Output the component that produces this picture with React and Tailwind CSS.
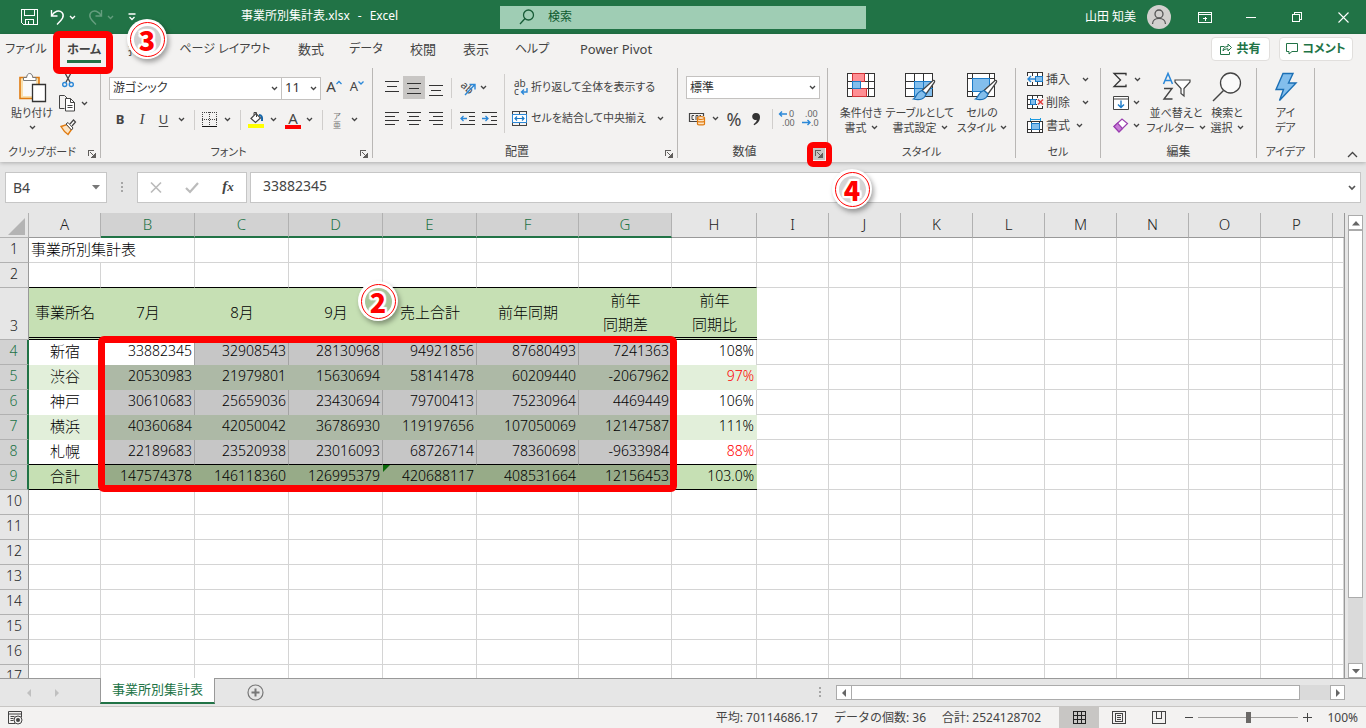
import React from "react";

const Svg = ({ w, h, children, crisp, className = "" }) => (
  <svg
    width={w}
    height={h}
    viewBox={`0 0 ${w} ${h}`}
    fill="none"
    stroke="#3b3a39"
    shapeRendering={crisp ? "crispEdges" : "auto"}
    className={`shrink-0 overflow-visible ${className}`}
    aria-hidden="true"
  >
    {children}
  </svg>
);

const Chev = ({ color = "#444", className = "" }) => (
  <Svg w={7} h={5} className={className}>
    <path d="M1 1l2.5 2.5L6 1" stroke={color} strokeWidth="1.3" />
  </Svg>
);

const Btn = ({ label, className = "", children }) => (
  <button type="button" aria-label={label} className={`flex shrink-0 items-center justify-center ${className}`}>
    {children}
  </button>
);

const Sep = ({ className = "h-5" }) => <span className={`w-px shrink-0 bg-[#d0cecc] ${className}`} />;

const Launcher = () => (
  <Svg w={8} h={8} crisp>
    <path d="M0.5 6V0.5H6M2.5 2.500l4 4M7.5 3v4.500h-5" stroke="#605e5c" />
    <path d="M4 6.500h3M6.500 4v3" stroke="#605e5c" />
  </Svg>
);

const Group = ({ name, width, launcher, small, children }) => (
  <section aria-label={name} className={`flex h-[90px] shrink-0 flex-col border-r border-[#b9b7b5] ${width}`}>
    <div className="flex h-[78px]">{children}</div>
    <div className={`relative flex h-3 items-center justify-center leading-3 ${small ? "text-[11px]" : "text-xs"}`}>
      <span className={launcher ? "pr-4" : ""}>{name}</span>
      {launcher}
    </div>
  </section>
);

const LaunchBtn = ({ name }) => (
  <button type="button" aria-label={`${name}の設定`} className="absolute right-1 top-1">
    <Launcher />
  </button>
);

const Badge = ({ n, className, inner }) => (
  <span
    className={`pointer-events-none absolute z-20 flex size-10 items-center justify-center rounded-full bg-white shadow-[2px_3px_5px_rgba(0,0,0,0.35)] ${className}`}
  >
    <span className="flex size-[35px] items-center justify-center rounded-full border-[1.5px] border-[#f00]">
      <span className={`flex size-[27px] items-center justify-center rounded-full ${inner}`}>
        <span className="font-['Noto_Sans_CJK_JP',sans-serif] text-[27px] leading-[27px] font-black text-[#f00] [text-shadow:2px_0_1px_#fff,-2px_0_1px_#fff,0_2px_1px_#fff,0_-2px_1px_#fff,2px_2px_1px_#fff,-2px_-2px_1px_#fff,2px_-2px_1px_#fff,-2px_2px_1px_#fff]">
          {n}
        </span>
      </span>
    </span>
  </span>
);

const Dropdown = ({ label, value, className }) => (
  <label className={`relative flex h-[23px] shrink-0 items-center border border-[#c4c2c0] bg-white ${className}`}>
    <select aria-label={label} className="h-full w-full appearance-none bg-transparent pl-[3px] text-[#333] outline-none">
      <option>{value}</option>
    </select>
    <Chev className="pointer-events-none absolute right-[3px]" />
  </label>
);

/* ---------- ribbon icons ---------- */
const PasteIcon = () => (
  <Svg w={28} h={30}>
    <path d="M2 5.5h19v21H2z" stroke="#e07b10" strokeWidth="1.6" fill="#f9e0ae" />
    <path d="M5 8h13v16H5z" fill="#fafafa" stroke="none" />
    <path d="M5.5 8.5v-3h3.200c0-2 1-4 3-4s3 2 3 4h3.300v3z" fill="#fff" stroke="#777" />
    <path d="M14.500 12.500h13v17h-13z" fill="#fff" stroke="#333" strokeWidth="1.3" />
  </Svg>
);
const CutIcon = () => (
  <Svg w={14} h={16}>
    <path d="M4 1l5.500 10M10 1L4.500 11" stroke="#444" strokeWidth="1.3" />
    <circle cx="3.700" cy="12.500" r="2" stroke="#2b88d8" strokeWidth="1.4" />
    <circle cx="10.300" cy="12.500" r="2" stroke="#2b88d8" strokeWidth="1.4" />
  </Svg>
);
const CopyIcon = () => (
  <Svg w={17} h={17}>
    <path d="M5.500 13.500h-5V.5h5l3 3" stroke="#444" />
    <path d="M6.500 3.500h5l4 4v8.500h-9z" fill="#fff" stroke="#444" />
    <path d="M11.500 3.500v4h4M8.500 10.500h5M8.500 12.500h5" stroke="#444" />
  </Svg>
);
const BrushIcon = () => (
  <Svg w={17} h={16}>
    <path d="M1 7.500l6-2 4.500 5-3.500 5C5 13.500 3 11 1 7.500z" fill="#fce4c4" stroke="#e07b10" strokeWidth="1.4" />
    <path d="M6 5l2-1.500 5 5.500-1.500 2z" fill="#fff" stroke="#444" />
    <path d="M10 5l3.500-4 2 2-3.500 4" fill="#fff" stroke="#444" strokeWidth="1.2" />
  </Svg>
);
const BordersIcon = () => (
  <Svg w={15} h={15} crisp>
    <path d="M.5 0v14M7.500 0v14M14.500 0v14M0 .5h15M0 7.500h15" stroke="#444" strokeDasharray="1 1" />
    <path d="M0 14.500h15" stroke="#111" />
  </Svg>
);
const FillIcon = () => (
  <Svg w={17} h={17}>
    <path d="M3 7.500l5-5 4.500 4.500-5 4.500z" fill="#fff" stroke="#444" strokeWidth="1.2" />
    <path d="M6 4V1.500h2.500V6" stroke="#444" />
    <path d="M11 4c2.500 0 3.500 2 3 6" stroke="#1565a8" strokeWidth="2" />
    <path d="M0 13h16v4H0z" fill="#ff0" stroke="none" />
  </Svg>
);
const AlignIcon = ({ lines }) => (
  <Svg w={14} h={16} crisp>
    {lines.map(([x, y, len]) => (
      <path key={y} d={`M${x} ${y}.5h${len}`} stroke="#333" />
    ))}
  </Svg>
);
const OrientIcon = () => (
  <Svg w={17} h={17}>
    <text x="1" y="7" transform="rotate(42 1 7)" fontSize="11" fill="#444" stroke="none">ab</text>
    <path d="M6 16L15.500 6M10.500 5.500h5.500v5" stroke="#2b88d8" strokeWidth="1.4" />
  </Svg>
);
const IndentIcon = ({ right }) => (
  <Svg w={15} h={13}>
    <path d="M0 .5h15M9 4.500h6M9 8.500h6M0 12.500h15" stroke="#333" shapeRendering="crispEdges" />
    {right ? (
      <path d="M0 6.500h6M3.500 4l2.500 2.500L3.500 9" stroke="#2b88d8" strokeWidth="1.3" />
    ) : (
      <path d="M7 6.500H1M3.500 4L1 6.500 3.500 9" stroke="#2b88d8" strokeWidth="1.3" />
    )}
  </Svg>
);
const WrapIcon = () => (
  <Svg w={15} h={17}>
    <text x="0" y="8" fontSize="10" fill="#444" stroke="none">ab</text>
    <text x="0" y="16" fontSize="10" fill="#444" stroke="none">c</text>
    <path d="M13 9v4H7.500M10 10.500L7.500 13l2.500 2.500" stroke="#2b88d8" strokeWidth="1.4" />
  </Svg>
);
const MergeIcon = () => (
  <Svg w={15} h={15}>
    <path d="M.5.5h14v14H.5zM7.500.5v14" stroke="#444" shapeRendering="crispEdges" />
    <path d="M.5 3.500h14v8H.5z" fill="#fff" stroke="#2b88d8" />
    <path d="M3 7.500h9M5 5.500l-2 2 2 2M10 5.500l2 2-2 2" stroke="#1b7ac7" strokeWidth="1.2" />
  </Svg>
);
const CurrencyIcon = () => (
  <Svg w={17} h={14}>
    <path d="M8 9.500H.5v-8h14V4" stroke="#444" strokeWidth="1.2" />
    <path d="M5 3.500H3v4h2M7 8V3.500h2v3M12 3.500h-1.500" stroke="#444" />
    <path d="M8.500 6v6c0 1.200 7 1.200 7 0V6z" fill="#fce4c4" stroke="#e07b10" strokeWidth="1.200" />
    <ellipse cx="12" cy="6" rx="3.500" ry="1.400" fill="#fff" stroke="#e07b10" strokeWidth="1.200" />
    <path d="M8.500 9c0 1.200 7 1.200 7 0" stroke="#e07b10" strokeWidth="1.200" />
  </Svg>
);
const DecimalIcon = ({ less }) => (
  <Svg w={17} h={17}>
    <text x={less ? 3 : 10} y="7" fontSize="9" fill="#666" stroke="none">{less ? ".00" : "0"}</text>
    <text x={less ? 9 : 3} y="16" fontSize="9" fill="#666" stroke="none">{less ? ".0" : ".00"}</text>
    {less ? (
      <path d="M0 12.500h8M5.500 10L8 12.500 5.500 15" stroke="#2b88d8" strokeWidth="1.4" />
    ) : (
      <path d="M8 4H.5M3 1.500L.5 4 3 6.500" stroke="#2b88d8" strokeWidth="1.4" />
    )}
  </Svg>
);
const CondIcon = () => (
  <Svg w={30} h={26} crisp>
    <path d="M1.500 1.500h27v23h-27z" fill="#fff" stroke="#333" />
    <path d="M6.500 1.500v23M22.500 1.500v23M1.500 9.500h27M1.500 16.500h27" stroke="#333" />
    <path d="M6.500 1.500h12v8h-12zM6.500 16.500h14v8h-14z" fill="#ff8f94" stroke="#d13438" />
    <path d="M6.500 9.500h8v7h-8z" fill="#83beec" stroke="#1b7ac7" />
  </Svg>
);
const Paint = () => (
  <>
    <path d="M29 8.500c1.500-.5 2 .5 1.300 2L22 22l-4-3.500z" fill="#fff" stroke="#444" strokeWidth="1.3" />
    <path d="M18 18.500l4 3.500c-1 5-6 6.500-12.500 5 3-1.500 2.500-7 8.500-8.500z" fill="#83beec" stroke="#1b6fb5" strokeWidth="1.2" />
  </>
);
const TableIcon = () => (
  <Svg w={32} h={29}>
    <path d="M1.500 1.500h27v23h-27z" fill="#fff" stroke="#333" shapeRendering="crispEdges" />
    <path d="M10 9h18v15H10z" fill="#83beec" stroke="none" />
    <path d="M1.500 9.500h27M1.500 16.500h27M10.500 1.500v23M19.500 1.500v23" stroke="#333" shapeRendering="crispEdges" />
    <path d="M10.500 24.500v-15h18M10.500 16.500h18M19.500 9.500v15" stroke="#1b7ac7" shapeRendering="crispEdges" />
    <Paint />
  </Svg>
);
const CellStyleIcon = () => (
  <Svg w={32} h={29}>
    <path d="M1.500 1.500h27v23h-27z" fill="#fff" stroke="#333" shapeRendering="crispEdges" />
    <path d="M6.500 1.500v23M23.500 1.500v5M1.500 6.500h27M1.500 19.500h5" stroke="#333" shapeRendering="crispEdges" />
    <path d="M6.500 6.500h17v13h-17z" fill="#83beec" stroke="#1b7ac7" shapeRendering="crispEdges" />
    <Paint />
  </Svg>
);
const CellIcon = ({ kind }) => (
  <Svg w={17} h={15}>
    {kind === "format" ? (
      <>
        <path d="M.5 3.500h15v11H.5zM4.500 3v11M12.500 3v11M.5 11.500h15" fill="#fff" stroke="#333" shapeRendering="crispEdges" />
        <path d="M4.500 5.500h8v6h-8z" fill="#83beec" stroke="#1b7ac7" shapeRendering="crispEdges" />
        <path d="M3.500 0v3M13.500 0v3M3.500 1.500h10" stroke="#1b9ae0" shapeRendering="crispEdges" />
      </>
    ) : (
      <>
        <path d="M.5.5h15v13H.5zM5.500.5v4M10.500.5v4M.5 4.500h15M.5 9.500h15M5.500 9.500v4M10.500 9.500v4" fill="#fff" stroke="#333" shapeRendering="crispEdges" />
        {kind === "insert" ? (
          <>
            <path d="M8.500 4.500h7v5h-7z" fill="#83beec" stroke="#1b7ac7" shapeRendering="crispEdges" />
            <path d="M0 4h8v6H0z" fill="#f3f2f1" stroke="none" />
            <path d="M8 7H1M4 4L1 7l3 3" stroke="#2b88d8" strokeWidth="1.4" />
          </>
        ) : (
          <>
            <path d="M3.500 4.500h5v5h-5z" fill="#83beec" stroke="#1b7ac7" shapeRendering="crispEdges" />
            <path d="M10 3h7v8h-7z" fill="#f3f2f1" stroke="none" />
            <path d="M11 4.500l5 5M16 4.500l-5 5" stroke="#e03c3c" strokeWidth="1.5" />
          </>
        )}
      </>
    )}
  </Svg>
);
const SortIcon = () => (
  <Svg w={29} h={30}>
    <path d="M1.500 12L6 1.500 10.500 12M3 8.500h6" stroke="#2b88d8" strokeWidth="1.5" />
    <path d="M2 16.500h8L2 27h8.500" stroke="#444" strokeWidth="1.4" />
    <path d="M13 8h15v2l-6 6.500v7.500l-3-2.500v-5L13 10z" fill="#fff" stroke="#444" strokeWidth="1.2" />
  </Svg>
);
const FindIcon = () => (
  <Svg w={30} h={30}>
    <circle cx="18.500" cy="11" r="10" fill="#fafafa" stroke="#444" strokeWidth="1.3" />
    <path d="M11.500 18.500L1 29" stroke="#444" strokeWidth="1.4" />
  </Svg>
);
const BoltIcon = () => (
  <Svg w={24} h={30}>
    <path d="M9 1.500h10L14.500 11H22L5.500 28.500 9.500 17.500H2z" fill="#83beec" stroke="#1b6fb5" strokeWidth="1.4" />
  </Svg>
);

const BigBtn = ({ icon, l1, l2, chev, className = "" }) => (
  <button type="button" className={`flex shrink-0 flex-col items-center pt-1 text-[11px] leading-[15px] whitespace-nowrap ${className}`}>
    <span className="flex h-[33px] items-start justify-center">{icon}</span>
    <span>{l1}</span>
    <span className="flex items-center gap-1">
      {l2}
      {chev && <Chev />}
    </span>
  </button>
);

const tabs = [
  ["ファイル", "w-[52px] text-xs"],
  ["ホーム", "w-[64px] text-xs"],
  ["挿入", "w-[50px] text-[13px]"],
  ["ページ レイアウト", "w-[118px] text-xs"],
  ["数式", "w-[54px] text-[13px]"],
  ["データ", "w-[56px] text-xs"],
  ["校閲", "w-[58px] text-[13px]"],
  ["表示", "w-[48px] text-[13px]"],
  ["ヘルプ", "w-[64px] text-xs"],
  ["Power Pivot", "w-[104px] text-[13px]"],
];

const TitleBar = () => (
  <header className="grid h-[34px] shrink-0 grid-cols-[1fr_366px_1fr] items-center bg-[#217346] text-xs text-white">
    <div className="flex items-center">
      <div className="flex w-[241px] items-center pl-5">
        <Btn label="上書き保存" className="w-[18px]">
          <Svg w={17} h={16} crisp>
            <path d="M.5.5h16v15h-14l-2-2zM3.500.5v6h10v-6M4.500 15v-5h8v5M7.500 12v3" stroke="#fff" />
          </Svg>
        </Btn>
        <Btn label="元に戻す" className="ml-3 gap-1">
          <Svg w={15} h={16}>
            <path d="M1.500 1v6h6M1.500 7C4.500 2 9 .500 12 3.500c3.500 4-1 8-5 12" stroke="#fff" strokeWidth="1.4" />
          </Svg>
          <Chev color="#fff" />
        </Btn>
        <Btn label="やり直し" className="ml-3 gap-1 opacity-30">
          <Svg w={15} h={16}>
            <path d="M13.500 1v6h-6M13.500 7C10.500 2 6 .500 3 3.500c-3.500 4 1 8 5 12" stroke="#fff" strokeWidth="1.4" />
          </Svg>
          <Chev color="#fff" />
        </Btn>
        <Btn label="クイック アクセス ツール バーのカスタマイズ" className="ml-[14px]">
          <Svg w={8} h={8}>
            <path d="M.5 1h7M1.500 4L4 6.500 6.500 4" stroke="#fff" strokeWidth="1.3" />
          </Svg>
        </Btn>
      </div>
      <h1 className="flex gap-2 pb-0.5 whitespace-nowrap">
        <span>事業所別集計表.xlsx</span>
        <span>-</span>
        <span>Excel</span>
      </h1>
    </div>
    <label className="flex h-[23px] items-center bg-[#9fcdb4] text-[#0d5a2e]">
      <Svg w={16} h={16} className="ml-[19px]">
        <circle cx="9.500" cy="6" r="5" stroke="#185c37" strokeWidth="1.3" />
        <path d="M6 9.500L1 15" stroke="#185c37" strokeWidth="1.3" />
      </Svg>
      <input
        type="text"
        aria-label="検索"
        placeholder="検索"
        className="ml-[13px] w-64 bg-transparent outline-none placeholder:text-[#0d5a2e]"
      />
    </label>
    <div className="flex items-center justify-end">
      <span>山田 知美</span>
      <Svg w={24} h={24} className="ml-[11px]">
        <circle cx="12" cy="12" r="12" fill="#d2d0ce" stroke="none" />
        <circle cx="12" cy="9" r="4" stroke="#555" strokeWidth="1.3" />
        <path d="M5.500 19c0-7.500 13-7.500 13 0" stroke="#555" strokeWidth="1.3" />
      </Svg>
      <Btn label="リボンの表示オプション" className="ml-[11px] w-[46px]">
        <Svg w={14} h={11} crisp>
          <path d="M.5.5h13v10H.5zM.5 2.500h13M7 9V5M5 6.500h4" stroke="#fff" />
        </Svg>
      </Btn>
      <Btn label="最小化" className="w-[46px]">
        <span className="h-px w-[10px] bg-white" />
      </Btn>
      <Btn label="元に戻す (縮小)" className="w-[46px]">
        <Svg w={11} h={11} crisp>
          <path d="M.5 2.500h7v7h-7zM2.500 2.500v-2h7v7h-2" stroke="#fff" />
        </Svg>
      </Btn>
      <Btn label="閉じる" className="w-[46px]">
        <Svg w={11} h={11}>
          <path d="M.5.5l10 10M10.500.5l-10 10" stroke="#fff" strokeWidth="1.1" />
        </Svg>
      </Btn>
    </div>
  </header>
);

const TabRow = () => (
  <nav className="flex h-[34px] shrink-0 items-center">
    {tabs.map(([t, w]) => (
      <div key={t} className={`relative flex shrink-0 justify-center ${w}`}>
        <button
          type="button"
          className={
            t === "ホーム"
              ? "border-b-[3px] border-[#217346] leading-5 font-bold whitespace-nowrap"
              : "pb-1 leading-5 whitespace-nowrap"
          }
        >
          {t}
        </button>
        {t === "ホーム" && (
          <span className="pointer-events-none absolute -top-[9px] left-px z-10 h-[43px] w-[60px] rounded-md border-[7px] border-[#f00]" />
        )}
        {t === "挿入" && <Badge n="3" className="-top-5 left-[11px]" inner="bg-[#cfcfcf]" />}
      </div>
    ))}
    <div className="ml-auto flex gap-[9px] pr-[13px] pb-1 text-xs font-bold text-[#217346]">
      <button type="button" className="flex h-6 w-[59px] items-center justify-center gap-1 rounded-sm border border-[#e1dfdd] bg-white whitespace-nowrap">
        <Svg w={12} h={12}>
          <path d="M4.500 3.500H.5v8h9V9" stroke="#217346" />
          <path d="M3 8c0-3 2-4.500 5-4.500v-2.500l3.500 3.500L8 8V5.800C5.500 5.800 4 6.500 3 8z" stroke="#217346" />
        </Svg>
        共有
      </button>
      <button type="button" className="flex h-6 w-[74px] items-center justify-center gap-1 rounded-sm border border-[#e1dfdd] bg-white whitespace-nowrap">
        <Svg w={12} h={12}>
          <path d="M.5.5h11v8H6l-3 2.500V8.500H.5z" stroke="#217346" />
        </Svg>
        コメント
      </button>
    </div>
  </nav>
);

const h = (v) => [[0, v, 14], [2, v + 5, 10], [0, v + 10, 14]];
const para = (x) => [[0, 1, 14], [x, 5, 10], [0, 9, 14], [x, 13, 10]];

const Ribbon = () => (
  <div className="flex h-[94px] shrink-0 text-xs">
    <Group name="クリップボード" width="w-[101px]" small launcher={<LaunchBtn name="クリップボード" />}>
      <button type="button" className="ml-[5px] flex w-[54px] flex-col items-center pt-1 text-[11px] leading-[15px] whitespace-nowrap">
        <span className="flex h-[33px]">
          <PasteIcon />
        </span>
        <span>貼り付け</span>
        <Chev className="mt-[5px]" />
      </button>
      <div className="flex flex-col gap-[7px] pt-1">
        <Btn label="切り取り" className="h-4 w-[18px]"><CutIcon /></Btn>
        <Btn label="コピー" className="h-[17px] gap-[5px]"><CopyIcon /><Chev /></Btn>
        <Btn label="書式のコピー" className="h-4 w-[18px]"><BrushIcon /></Btn>
      </div>
    </Group>

    <Group name="フォント" width="w-[272px]" small launcher={<LaunchBtn name="フォント" />}>
      <div className="flex flex-col gap-2 pt-2 pl-2">
        <div className="flex items-center">
          <Dropdown label="フォント" value="游ゴシック" className="w-[173px]" />
          <Dropdown label="フォント サイズ" value="11" className="-ml-px w-10 text-[13px]" />
          <Btn label="フォント サイズの拡大" className="w-[26px] pb-1 text-[15px] leading-5">
            A<Svg w={6} h={12}><path d="M.5 4L3 1.500 5.500 4" stroke="#2b88d8" strokeWidth="1.3" /></Svg>
          </Btn>
          <Btn label="フォント サイズの縮小" className="w-[20px] pb-1 text-[13px] leading-5">
            A<Svg w={6} h={12}><path d="M.5 1.500L3 4l2.500-2.500" stroke="#2b88d8" strokeWidth="1.3" /></Svg>
          </Btn>
        </div>
        <div className="flex h-[23px] items-center text-[13px]">
          <Btn label="太字" className="w-[22px] font-bold">B</Btn>
          <Btn label="斜体" className="w-[22px] font-['Liberation_Serif',serif] text-[15px] italic">I</Btn>
          <Btn label="下線" className="w-[21px] underline underline-offset-2">U</Btn>
          <Btn label="下線の種類" className="w-[15px]"><Chev /></Btn>
          <Sep className="ml-[5px] h-5" />
          <Btn label="罫線" className="ml-[7px] gap-[7px]"><BordersIcon /><Chev /></Btn>
          <Sep className="ml-[9px] h-5" />
          <Btn label="塗りつぶしの色" className="ml-[7px] gap-[5px]"><FillIcon /><Chev /></Btn>
          <Btn label="フォントの色" className="ml-[8px] gap-[5px]">
            <span className="w-4 border-b-4 border-[#f00] text-[15px] leading-[14px]">A</span>
            <Chev />
          </Btn>
          <Sep className="ml-[9px] h-5" />
          <Btn label="ふりがなの表示" className="ml-2.5 gap-2.5 text-[#777]">
            <span className="flex flex-col text-[8px] leading-[9px]">
              <span>ア</span>
              <span>亜</span>
            </span>
            <Chev />
          </Btn>
        </div>
      </div>
    </Group>

    <Group name="配置" width="w-[305px]" launcher={<LaunchBtn name="配置" />}>
      <div className="flex flex-col gap-2 pt-2 pl-2">
        <div className="flex h-[23px] items-center">
          <Btn label="上揃え" className="h-full w-[22px]"><AlignIcon lines={h(1)} /></Btn>
          <Btn label="上下中央揃え" className="h-full w-[22px] bg-[#c8c6c4]"><AlignIcon lines={h(3)} /></Btn>
          <Btn label="下揃え" className="h-full w-[22px]"><AlignIcon lines={h(5)} /></Btn>
          <Sep className="mx-1 h-5" />
          <Btn label="方向" className="ml-[3px] gap-1"><OrientIcon /><Chev /></Btn>
        </div>
        <div className="flex h-[23px] items-center">
          <Btn label="左揃え" className="w-[22px]"><AlignIcon lines={para(0)} /></Btn>
          <Btn label="中央揃え" className="w-[22px]"><AlignIcon lines={para(2)} /></Btn>
          <Btn label="右揃え" className="w-[22px]"><AlignIcon lines={para(4)} /></Btn>
          <Sep className="mx-1 h-5" />
          <Btn label="インデントを減らす" className="w-[22px]"><IndentIcon /></Btn>
          <Btn label="インデントを増やす" className="w-[22px]"><IndentIcon right /></Btn>
        </div>
      </div>
      <Sep className="mt-1.5 ml-1 h-[59px]" />
      <div className="flex flex-col gap-2 pt-2 pl-[7px] text-[11px]">
        <button type="button" className="flex h-[23px] items-center gap-0.5 pl-0.5 whitespace-nowrap">
          <WrapIcon />折り返して全体を表示する
        </button>
        <button type="button" className="flex h-[23px] w-[152px] items-center gap-1 whitespace-nowrap">
          <MergeIcon />セルを結合して中央揃え<Chev className="ml-auto" />
        </button>
      </div>
    </Group>

    <Group
      name="数値"
      width="w-[150px]"
      launcher={
        <>
          <button type="button" aria-label="数値の設定" className="absolute right-0.5 top-0.5 flex size-3 items-center justify-center bg-[#c8c6c4]">
            <Launcher />
          </button>
          <span className="pointer-events-none absolute -top-1 -right-[5px] z-10 size-[25px] rounded-md border-[6px] border-[#f00]" />
          <Badge n="4" className="top-[23px] -right-[45px]" inner="bg-[#d4d4d4]" />
        </>
      }
    >
      <div className="flex flex-col gap-2 pt-2 pl-2">
        <Dropdown label="表示形式" value="標準" className="w-[134px]" />
        <div className="flex h-[23px] items-center">
          <Btn label="通貨表示形式" className="ml-[3px] gap-1.5"><CurrencyIcon /><Chev /></Btn>
          <Btn label="パーセント スタイル" className="ml-[6px] w-[18px] text-[18px] leading-5">%</Btn>
          <Btn label="桁区切りスタイル" className="ml-[7px] w-3">
            <Svg w={10} h={14}>
              <path d="M5 1a3.500 3.500 0 1 0 .8 6.800C5.500 9.800 4.200 11.200 2.500 12.200l.8 1C6.500 11.600 9 9 9 5 9 2.500 7.500 1 5 1z" fill="#333" stroke="none" />
            </Svg>
          </Btn>
          <Sep className="ml-2.5 h-5" />
          <Btn label="小数点以下の表示桁数を増やす" className="ml-1.5"><DecimalIcon /></Btn>
          <Btn label="小数点以下の表示桁数を減らす" className="ml-1.5"><DecimalIcon less /></Btn>
        </div>
      </div>
    </Group>

    <Group name="スタイル" width="w-[188px]" small>
      <BigBtn icon={<CondIcon />} l1="条件付き" l2="書式" chev className="ml-2 w-[50px]" />
      <BigBtn icon={<TableIcon />} l1="テーブルとして" l2="書式設定" chev className="w-[68px]" />
      <BigBtn icon={<CellStyleIcon />} l1="セルの" l2="スタイル" chev className="w-[56px]" />
    </Group>

    <Group name="セル" width="w-[85px]" small>
      <div className="flex flex-col pl-[11px]">
        {[["insert", "挿入", "ml-2.5"], ["delete", "削除", "ml-2.5"], ["format", "書式", "ml-1"]].map(([k, t, m]) => (
          <button key={k} type="button" className="flex h-[23px] items-center gap-0.5 whitespace-nowrap">
            <CellIcon kind={k} />{t}<Chev className={m} />
          </button>
        ))}
      </div>
    </Group>

    <Group name="編集" width="w-[156px]">
      <div className="flex flex-col pl-[11px]">
        <Btn label="オート SUM" className="h-[23px] gap-1.5">
          <Svg w={16} h={16}><path d="M14 3.500V1.500H2L8.500 8 2 14.500h12v-2" stroke="#333" strokeWidth="1.300" /></Svg>
          <Chev />
        </Btn>
        <Btn label="フィル" className="h-[23px] gap-1">
          <Svg w={16} h={14}>
            <path d="M.5.5h15v13H.5zM.5 3h15" fill="#fff" stroke="#444" />
            <path d="M8 4.500v7M5 8.500l3 3 3-3" stroke="#1b7ac7" strokeWidth="1.400" />
          </Svg>
          <Chev />
        </Btn>
        <Btn label="クリア" className="h-[23px] gap-1">
          <Svg w={16} h={15}>
            <path d="M1 8.500L9 1l5.500 4.500-8.500 8.500z" fill="#fff" stroke="#9a3fb0" strokeWidth="1.200" />
            <path d="M1 8.500L4.500 5l5 5.500L6 14z" fill="#c77bd6" stroke="#9a3fb0" strokeWidth="1.200" />
          </Svg>
          <Chev />
        </Btn>
      </div>
      <BigBtn icon={<SortIcon />} l1="並べ替えと" l2="フィルター" chev className="ml-[5px] w-[60px]" />
      <BigBtn icon={<FindIcon />} l1="検索と" l2="選択" chev className="w-[42px]" />
    </Group>

    <Group name="アイデア" width="w-[58px]" small>
      <BigBtn icon={<BoltIcon />} l1="アイ" l2="デア" className="w-full" />
    </Group>

    <Btn label="リボンを折りたたむ" className="mt-auto mr-2 mb-1 ml-auto">
      <Svg w={11} h={7}><path d="M1 6l4.500-4.500L10 6" stroke="#444" strokeWidth="1.300" /></Svg>
    </Btn>
  </div>
);

const Dots = () => (
  <Svg w={2} h={11} crisp>
    <path d="M1 0v2M1 4v2M1 8v2" stroke="#a6a6a6" strokeWidth="2" />
  </Svg>
);

const FormulaBar = () => (
  <div className="mt-2.5 flex h-[31px] shrink-0 items-stretch px-[5px] text-sm text-[#444]">
    <label className="flex w-[102px] items-center border border-[#c6c6c6] bg-white pr-1.5">
      <input aria-label="名前ボックス" defaultValue="B4" className="min-w-0 flex-1 bg-transparent pl-[7px] outline-none" />
      <Svg w={8} h={5}><path d="M0 0h8L4 4.500z" fill="#777" stroke="none" /></Svg>
    </label>
    <span className="flex w-[30px] items-center justify-center"><Dots /></span>
    <div className="flex w-[110px] items-center border border-[#c6c6c6] bg-white">
      <Btn label="キャンセル" className="w-9">
        <Svg w={12} h={11}><path d="M1 .500l10 10M11 .500l-10 10" stroke="#bbb" strokeWidth="1.700" /></Svg>
      </Btn>
      <Btn label="入力" className="w-9">
        <Svg w={14} h={11}><path d="M1 6l4 4L13 1" stroke="#bbb" strokeWidth="2.200" /></Svg>
      </Btn>
      <Btn label="関数の挿入" className="w-9 pb-0.5 font-['Liberation_Serif',serif] text-[15px] font-bold italic">
        f<span className="pt-0.5 text-[13px]">x</span>
      </Btn>
    </div>
    <label className="ml-[3px] flex flex-1 items-center border border-[#c6c6c6] bg-white pr-1">
      <input aria-label="数式バー" defaultValue="33882345" className="min-w-0 flex-1 bg-transparent pb-1 pl-3 outline-none" />
      <Svg w={8} h={6}><path d="M1 1l3 3 3-3" stroke="#555" strokeWidth="1.700" /></Svg>
    </label>
  </div>
);

const cols = [
  ["A", "w-[72px]"], ["B", "w-[94px]"], ["C", "w-[94px]"], ["D", "w-[94px]"], ["E", "w-[94px]"],
  ["F", "w-[102px]"], ["G", "w-[93px]"], ["H", "w-[85px]"], ["I", "w-[72px]"], ["J", "w-[72px]"],
  ["K", "w-[72px]"], ["L", "w-[72px]"], ["M", "w-[72px]"], ["N", "w-[72px]"], ["O", "w-[72px]"],
  ["P", "w-[72px]"], ["", ""],
];

const data = [
  ["新宿", "33882345", "32908543", "28130968", "94921856", "87680493", "7241363", "108%"],
  ["渋谷", "20530983", "21979801", "15630694", "58141478", "60209440", "-2067962", "97%"],
  ["神戸", "30610683", "25659036", "23430694", "79700413", "75230964", "4469449", "106%"],
  ["横浜", "40360684", "42050042", "36786930", "119197656", "107050069", "12147587", "111%"],
  ["札幌", "22189683", "23520938", "23016093", "68726714", "78360698", "-9633984", "88%"],
  ["合計", "147574378", "146118360", "126995379", "420688117", "408531664", "12156453", "103.0%"],
];

const RowHead = ({ n, selected, bottom }) => (
  <th
    scope="row"
    className={`border-b border-b-[#b1b1b1] px-0 pt-0 text-center text-sm leading-5 font-light ${bottom ? "pb-[3px] align-bottom" : "pb-[3px] align-middle"} ${
      selected ? "border-r-2 border-r-[#217346] bg-[#d2d2d2] text-[#217346]" : "border-r border-r-[#999] bg-[#e6e6e6] text-[#222]"
    }`}
  >
    {n}
  </th>
);

const Blank = ({ count, black }) =>
  Array.from({ length: count }, (_, i) => (
    <td key={i} className={`border-r border-b border-r-[#d4d4d4] p-0 ${black && i < 8 ? "border-b-black" : "border-b-[#d4d4d4]"}`} />
  ));

const Sheet = () => (
  <div className="relative min-w-0 flex-1 overflow-hidden border-r border-[#999]">
    <table className="w-full table-fixed border-separate border-spacing-0 bg-white text-sm leading-5 font-light text-black">
      <colgroup>
        <col className="w-[29px]" />
        {cols.map(([c, w]) => <col key={c} className={w} />)}
      </colgroup>
      <thead>
        <tr className="h-[25px]">
          <th className="border-r border-b border-[#b1b1b1] bg-[#e6e6e6] p-0 align-bottom" aria-label="すべて選択">
            <Svg w={18} h={20} className="ml-2"><path d="M17 1v17H0z" fill="#b4b4b4" stroke="none" /></Svg>
          </th>
          {cols.map(([c], i) => (
            <th
              key={c}
              scope="col"
              className={`px-0 pt-0 pb-0.5 text-center text-[15px] leading-5 font-light ${i < 16 ? "border-r border-r-[#b1b1b1]" : ""} ${
                i > 0 && i < 7 ? "border-b-2 border-b-[#217346] bg-[#d2d2d2] text-[#217346]" : "border-b border-b-[#999] bg-[#e6e6e6] text-[#222]"
              }`}
            >
              {c}
            </th>
          ))}
        </tr>
      </thead>
      <tbody>
        <tr className="h-[25px]">
          <RowHead n={1} />
          <td colSpan={2} className="border-r border-b border-[#d4d4d4] pt-0 pr-0 pb-[3px] pl-0.5 text-[15px] whitespace-nowrap">事業所別集計表</td>
          <Blank count={15} />
        </tr>
        <tr className="h-[25px]">
          <RowHead n={2} />
          <Blank count={17} black />
        </tr>
        <tr className="h-[52px]">
          <RowHead n={3} bottom />
          {["事業所名", "7月", "8月", "9月", "売上合計", "前年同期", "前年\n同期差", "前年\n同期比"].map((t) => (
            <td key={t} className="border-b-[3px] border-double border-black bg-[#c6e0b4] px-0 pt-0 pb-px text-center text-[15px] leading-[24px] whitespace-pre">
              {t}
            </td>
          ))}
          <Blank count={9} />
        </tr>
        {data.map((row, r) => {
          const total = r === 5;
          const band = r === 1 || r === 3;
          const plain = total ? "bg-[#c6e0b4]" : band ? "bg-[#e2efda]" : "bg-white";
          const picked = total ? "bg-[#97ab88]" : band ? "bg-[#adb9a6]" : "bg-[#c6c6c6]";
          const under = r >= 4 ? "border-b border-b-black" : "";
          return (
            <tr key={row[0]} className="h-[25px]">
              <RowHead n={r + 4} selected />
              {row.map((v, c) => {
                const inSel = c > 0 && c < 7;
                const active = r === 0 && c === 1;
                const line = band || total ? "" : inSel ? "border-r border-r-[#a3a3a3]" : c === 7 ? "border-r border-r-[#d4d4d4]" : "";
                return (
                  <td
                    key={c}
                    className={`relative pt-0 pb-[3px] pl-0 ${c === 0 ? "pr-0 text-center text-[15px]" : line ? "pr-0.5 text-right" : "pr-[3px] text-right"} ${
                      inSel && !active ? picked : plain
                    } ${line} ${under} ${v === "97%" || v === "88%" ? "text-[#f00]" : ""}`}
                  >
                    {total && c === 4 && (
                      <Svg w={7} h={7} className="absolute top-0 left-0"><path d="M0 0h7L0 7z" fill="#0a6b0a" stroke="none" /></Svg>
                    )}
                    {v}
                  </td>
                );
              })}
              <Blank count={9} />
            </tr>
          );
        })}
        {[10, 11, 12, 13, 14, 15, 16, 17].map((n) => (
          <tr key={n} className="h-[25px]">
            <RowHead n={n} />
            <Blank count={17} />
          </tr>
        ))}
      </tbody>
    </table>
    <span className="pointer-events-none absolute top-[123px] left-[98px] z-10 h-[156px] w-[579px] rounded-md border-[7px] border-[#f00]" />
    <Badge n="2" className="top-[68px] left-[358px]" inner="bg-[#a9c49a]" />
  </div>
);

const Arrow = ({ dir, color = "#666" }) => {
  const d = { up: "M0 6.500h8L4 2z", down: "M0 2h8L4 6.500z", left: "M6 0v8L2 4z", right: "M2 0v8l4-4z" }[dir];
  return <Svg w={8} h={8}><path d={d} fill={color} stroke="none" /></Svg>;
};

const VScroll = () => (
  <div className="flex w-[21px] shrink-0 flex-col items-center pt-0.5">
    <div className="flex w-[15px] flex-1 flex-col bg-[#dadada]">
      <Btn label="上へスクロール" className="h-[15px] border border-[#ababab] bg-white"><Arrow dir="up" /></Btn>
      <span className="h-[368px] border border-[#ababab] bg-white" />
      <Btn label="下へスクロール" className="mt-auto h-[15px] border border-[#ababab] bg-white"><Arrow dir="down" /></Btn>
    </div>
  </div>
);

const SheetTabs = () => (
  <div className="flex h-[28px] shrink-0 items-start">
    <div className="flex h-full flex-1 border-t border-[#999]">
      <div className="flex w-[100px] items-center gap-5 pl-[25px]">
        <Btn label="前のシート"><Arrow dir="left" color="#c0c0c0" /></Btn>
        <Btn label="次のシート"><Arrow dir="right" color="#c0c0c0" /></Btn>
      </div>
      <button type="button" className="-mt-px h-[26px] w-[115px] border-x border-b-2 border-x-[#999] border-b-[#217346] bg-white text-[13px] text-[#217346]">
        事業所別集計表
      </button>
      <Btn label="新しいシート" className="ml-8 h-[26px]">
        <Svg w={17} h={17}>
          <circle cx="8.500" cy="8.500" r="7.500" stroke="#777" strokeWidth="1.200" />
          <path d="M8.500 4.500v8M4.500 8.500h8" stroke="#777" strokeWidth="2" />
        </Svg>
      </Btn>
      <div className="ml-auto flex h-[26px] items-center"><Dots /></div>
    </div>
    <div className="flex h-full w-[545px] border-t border-[#999] pt-1.5 pr-[21px] pl-[15px]">
      <div className="flex h-[15px] flex-1 bg-[#dadada]">
        <Btn label="左へスクロール" className="w-4 border border-[#ababab] bg-white"><Arrow dir="left" /></Btn>
        <span className="-ml-px w-[449px] border border-[#ababab] bg-white" />
        <Btn label="右へスクロール" className="ml-auto w-[15px] border border-[#ababab] bg-white"><Arrow dir="right" /></Btn>
      </div>
    </div>
  </div>
);

const StatusBar = () => (
  <footer className="flex h-[22px] shrink-0 items-center border-t border-[#c8c6c4] bg-[#f3f2f1] text-xs text-[#444]">
    <Btn label="マクロの記録" className="ml-2">
      <Svg w={15} h={14}>
        <path d="M7 12.500H.5V.5h13V6M.5 3h13M2.500 5.500h4M2.500 7.500h3M2.500 9.500h3" stroke="#444" />
        <circle cx="10" cy="9" r="4" fill="#f3f2f1" stroke="#444" />
        <circle cx="10" cy="9" r="2" fill="#444" stroke="none" />
      </Svg>
    </Btn>
    <div className="ml-auto flex gap-4 pr-[18px] whitespace-nowrap">
      <span>平均: 70114686.17</span>
      <span>データの個数: 36</span>
      <span>合計: 2524128702</span>
    </div>
    <Btn label="標準" className="h-full w-10 bg-[#c8c6c4]">
      <Svg w={13} h={13} crisp><path d="M.5.5h12v12H.5zM4.500.5v12M8.500.5v12M.5 4.500h12M.5 8.500h12" stroke="#222" /></Svg>
    </Btn>
    <Btn label="ページ レイアウト" className="h-full w-10">
      <Svg w={14} h={13} crisp><path d="M.5.5h13v12H.5zM3.500 2.500h7v8h-7zM5 4.500h4M5 6.500h4M5 8.500h4" stroke="#444" /></Svg>
    </Btn>
    <Btn label="改ページ プレビュー" className="h-full w-10">
      <Svg w={14} h={13} crisp><path d="M.5.5h13v12H.5zM4.500.5v7h5v-7" stroke="#444" /></Svg>
    </Btn>
    <Btn label="縮小" className="ml-1.5 w-2"><span className="h-px w-2 bg-[#444]" /></Btn>
    <input
      type="range"
      aria-label="ズーム"
      min="0"
      max="100"
      defaultValue="50"
      className="mx-[5px] h-4 w-[100px] appearance-none bg-[linear-gradient(#a19f9d,#a19f9d)] bg-[length:100%_1px] bg-center bg-no-repeat [&::-webkit-slider-thumb]:h-[11px] [&::-webkit-slider-thumb]:w-[5px] [&::-webkit-slider-thumb]:appearance-none [&::-webkit-slider-thumb]:bg-[#6b6967]"
    />
    <Btn label="拡大" className="w-2">
      <Svg w={9} h={9} crisp><path d="M4.500 0v9M0 4.500h9" stroke="#444" /></Svg>
    </Btn>
    <span className="w-[55px] pr-2 text-right">100%</span>
  </footer>
);

export default function App() {
  return (
    <div className="flex h-screen flex-col overflow-hidden bg-[#e6e6e6] font-['Noto_Sans','Noto_Sans_CJK_JP',sans-serif] text-[#444]">
      <TitleBar />
      <div className="relative z-10 shrink-0 bg-[#f3f2f1] shadow-[0_1px_4px_rgba(0,0,0,0.25)] [font-feature-settings:'palt']">
        <TabRow />
        <Ribbon />
      </div>
      <FormulaBar />
      <main className="mt-2.5 flex min-h-0 flex-1">
        <Sheet />
        <VScroll />
      </main>
      <SheetTabs />
      <StatusBar />
    </div>
  );
}
